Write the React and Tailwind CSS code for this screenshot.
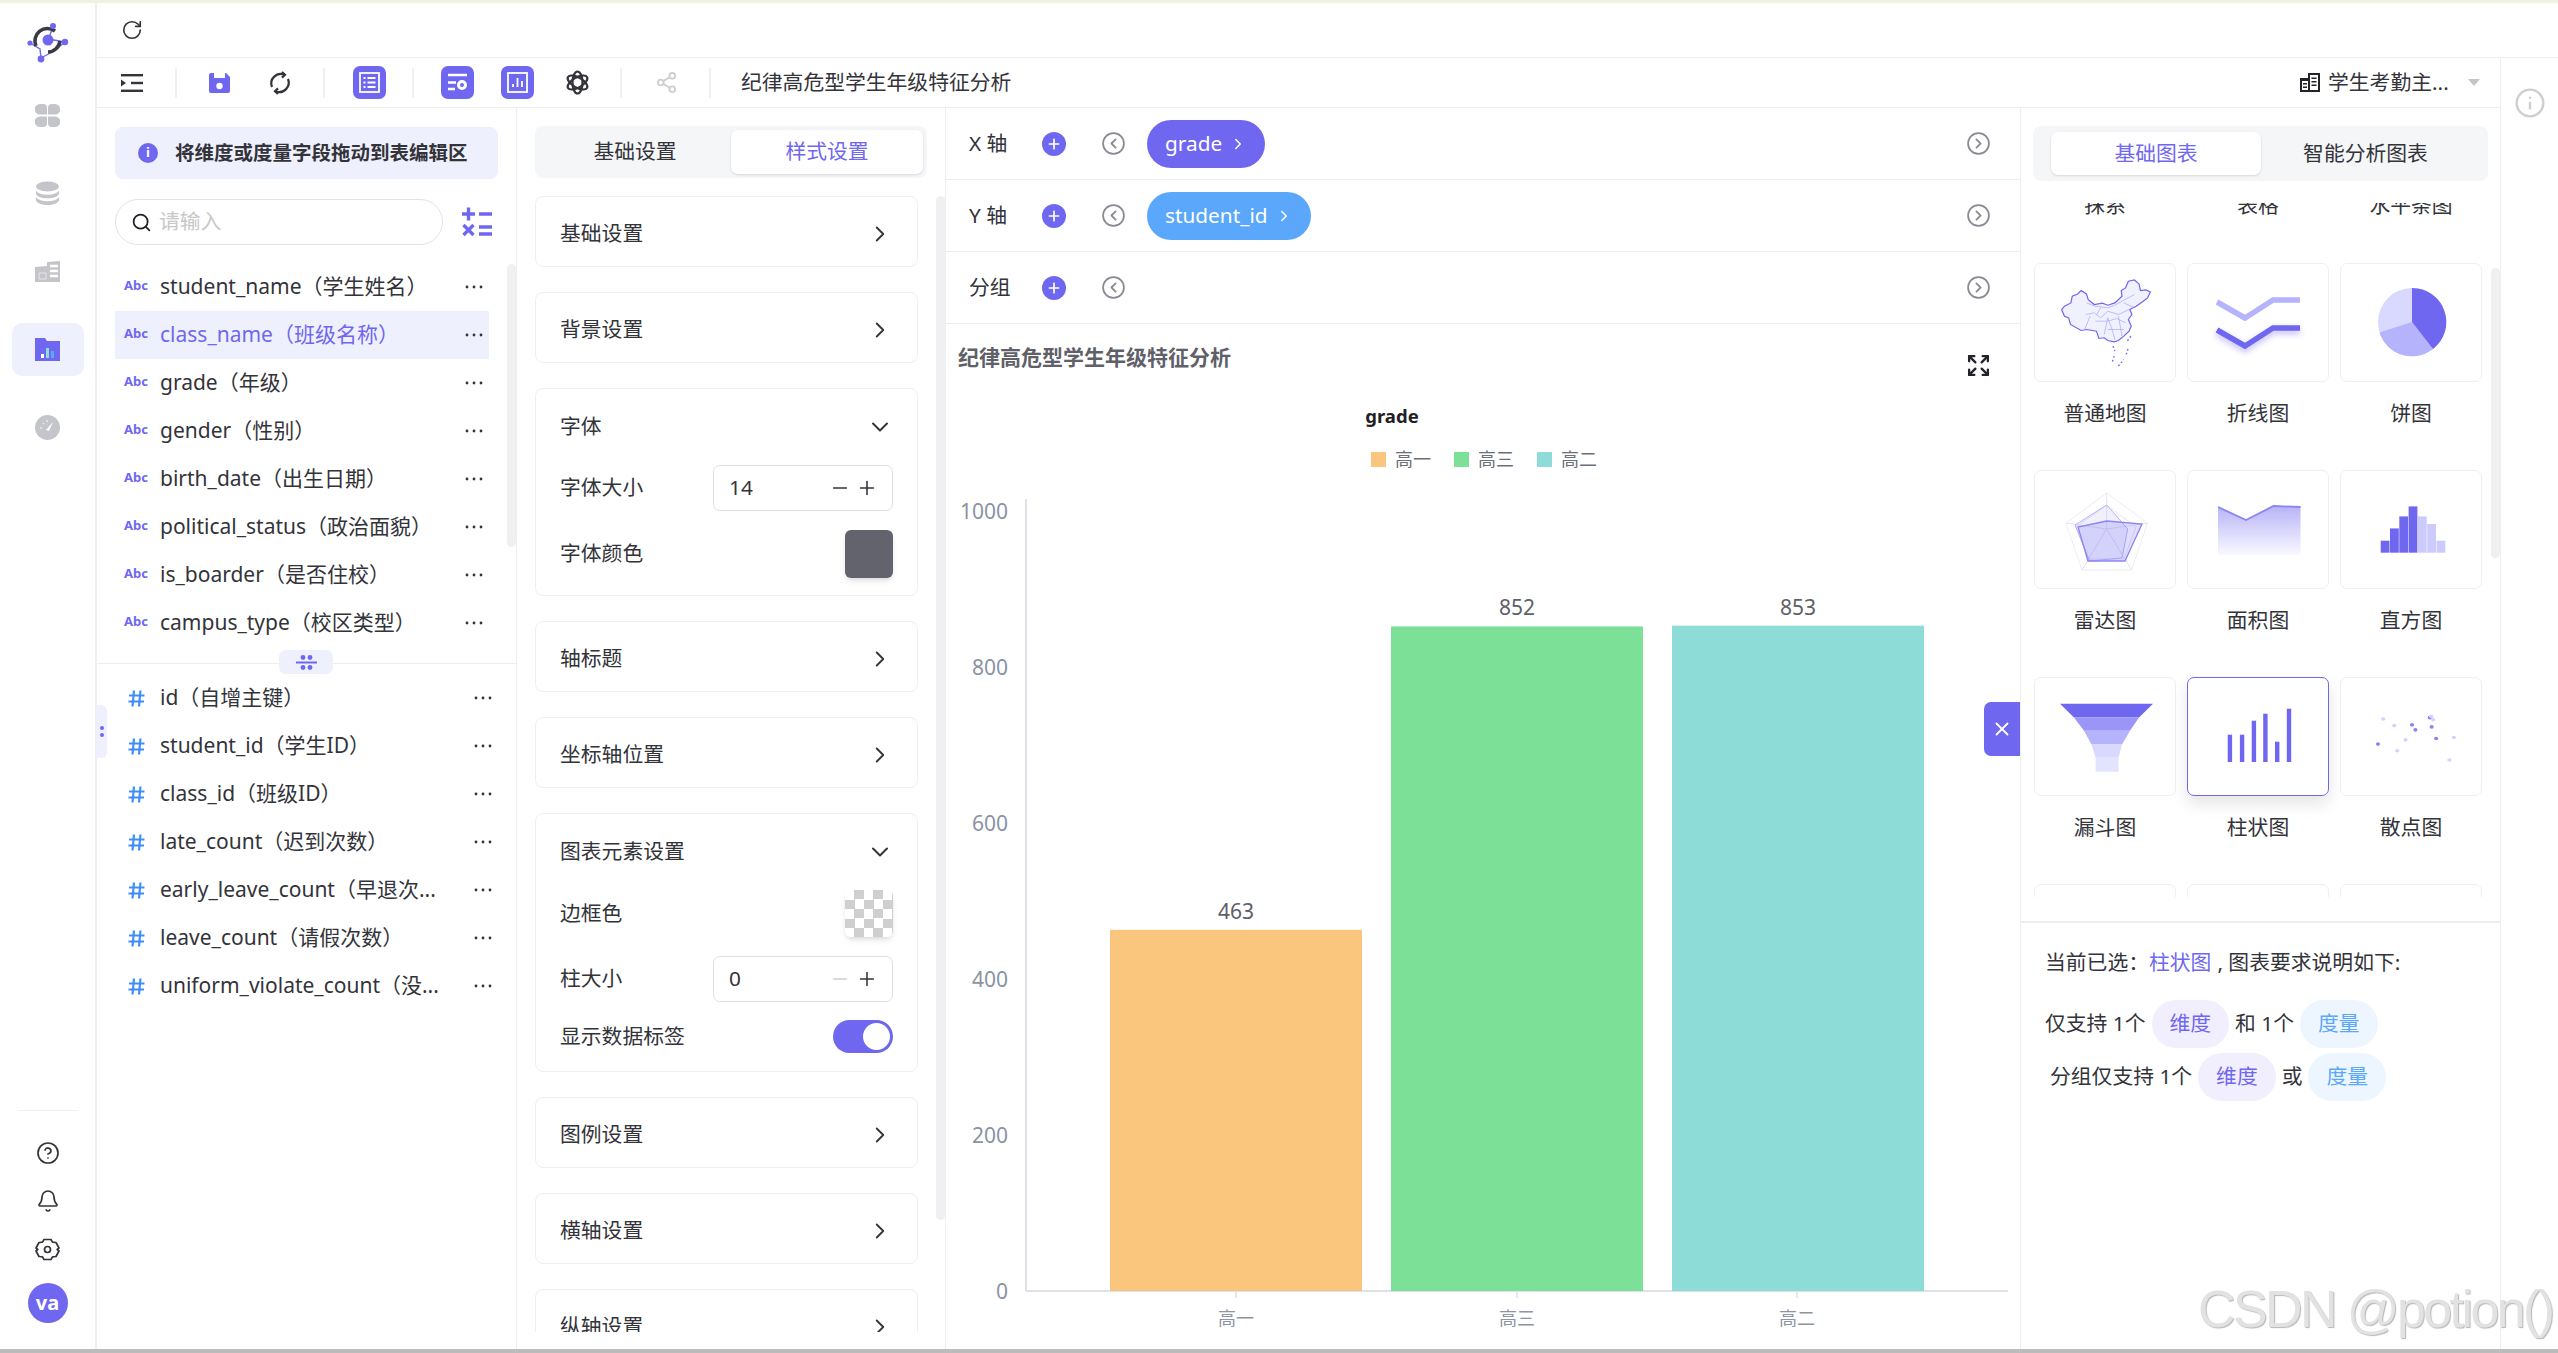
import React from 'react';
import { Search, ChevronRight, ChevronDown, Plus, Minus, X, Info, RotateCw, CircleChevronLeft, CircleChevronRight, CircleHelp, Bell, Share2, Expand } from 'lucide-react';

const dims = ['student_name（学生姓名）', 'class_name（班级名称）', 'grade（年级）', 'gender（性别）', 'birth_date（出生日期）', 'political_status（政治面貌）', 'is_boarder（是否住校）', 'campus_type（校区类型）'];
const measures = ['id（自增主键）', 'student_id（学生ID）', 'class_id（班级ID）', 'late_count（迟到次数）', 'early_leave_count（早退次...', 'leave_count（请假次数）', 'uniform_violate_count（没...'];

const Dots = () => (
    <svg width="18" height="4" viewBox="0 0 18 4" fill="#33333a"><circle cx="2" cy="2" r="1.4" /><circle cx="9" cy="2" r="1.4" /><circle cx="16" cy="2" r="1.4" /></svg>
);

// Left rail
const Logo = () => (
    <svg width="43" height="43" viewBox="0 0 43 43" fill="none">
        <g stroke="#7067f0" strokeWidth="1.4">
            <path d="M27 6 L22 19 M4 22 L14 28 L15 37 M39 21 L22 18 M15 37 L28 30 L39 21" />
        </g>
        <path d="M10 25a12.500 12.500 0 0 1 19-15" stroke="#3a3a44" strokeWidth="3.600" />
        <path d="M34 20a12.500 12.500 0 0 1-12 11" stroke="#3a3a44" strokeWidth="3.600" />
        <circle cx="22" cy="19" r="5.500" fill="#7067f0" />
        <circle cx="27" cy="5" r="3" fill="#7067f0" />
        <circle cx="4" cy="22" r="2.600" fill="#7067f0" />
        <circle cx="39" cy="21" r="3.200" fill="#7067f0" />
        <circle cx="15" cy="38" r="3.400" fill="#7067f0" />
    </svg>
);

const RailPetals = () => (
    <svg width="25" height="25" viewBox="0 0 25 25" fill="#c4c4cb">
        <path d="M5 1h3a4 4 0 0 1 4 4v6.500H5a4.500 4.500 0 0 1 0-10.500z" />
        <path d="M20 1h-3a4 4 0 0 0-4 4v6.500h7a4.500 4.500 0 0 0 0-10.500z" />
        <path d="M5 24h3a4 4 0 0 0 4-4v-6.500H5a4.500 4.500 0 0 0 0 10.500z" />
        <path d="M20 24h-3a4 4 0 0 1-4-4v-6.500h7a4.500 4.500 0 0 1 0 10.500z" />
    </svg>
);

const RailDb = () => (
    <svg width="25" height="25" viewBox="0 0 25 25" fill="#c4c4cb">
        <ellipse cx="12.500" cy="5.500" rx="11.500" ry="5" />
        <path d="M1 9.500c2 3 6 4.300 11.500 4.300S22 12.500 24 9.500v3.500c-1.500 3-6 4.300-11.500 4.300S2.500 16 1 13z" />
        <path d="M1 16c2 3 6 4.300 11.500 4.300S22 19 24 16v3.500c-1.500 3-6 4.500-11.500 4.500S2.500 22.500 1 19.500z" />
    </svg>
);

const RailFolder = () => (
    <svg width="25" height="25" viewBox="0 0 25 25">
        <path d="M0 8l12-1V3l13-1v21H0z" fill="#c4c4cb" />
        <path d="M15 7h8M15 12h8M15 17h8" stroke="#fff" strokeWidth="2.400" />
        <path d="M4 14h7v6H4z" fill="none" stroke="#e6e6ea" strokeWidth="1" />
    </svg>
);

const RailActive = () => (
    <svg width="25" height="25" viewBox="0 0 25 25">
        <path d="M0 1h10l2 3h13v20H0z" fill="#7067f0" />
        <rect x="6" y="17" width="3" height="4" fill="#fff" />
        <rect x="11" y="11" width="3" height="10" fill="#8edcd8" />
        <rect x="16" y="14" width="3" height="7" fill="#5ba7fb" />
    </svg>
);

const RailGauge = () => (
    <svg width="25" height="25" viewBox="0 0 25 25">
        <circle cx="12.500" cy="12.500" r="12.500" fill="#c4c4cb" />
        <path d="M11 15l7-8-4 9z" fill="#fff" />
        <path d="M5 13h2M8 8l1 1M12 5v2" stroke="#e8e8ec" strokeWidth="1.500" />
    </svg>
);

const GearHex = () => (
    <svg width="25" height="25" viewBox="0 0 25 25" fill="none" stroke="#33333a" strokeWidth="1.700" strokeLinejoin="round">
        <path d="M9 2.500h7l1.500 2.700 3.500.3 3 5.500-1.800 1.500 1.800 1.500-3 5.500-3.500.3L16 22.500H9l-1.500-2.700-3.500-.3-3-5.500L2.800 12.500 1 11l3-5.500 3.500-.3z" />
        <circle cx="12.500" cy="12.500" r="3" />
    </svg>
);

// Toolbar icons
const IndentIcon = () => (
    <svg width="22" height="22" viewBox="0 0 22 22" fill="#33333a">
        <rect x="0" y="2" width="22" height="2.400" /><rect x="10" y="9.800" width="12" height="2.400" /><rect x="0" y="17.600" width="22" height="2.400" />
        <path d="M0 7.500l5 3.500-5 3.500z" />
    </svg>
);

const SaveIcon = () => (
    <svg width="22" height="22" viewBox="0 0 22 22">
        <path d="M2 1h15l4 4v14a2 2 0 0 1-2 2H2a2 2 0 0 1-2-2V3a2 2 0 0 1 2-2z" fill="#7067f0" />
        <rect x="5" y="1" width="11" height="5" fill="#fff" />
        <circle cx="10.500" cy="14" r="3.200" fill="#fff" />
    </svg>
);

const SyncIcon = () => (
    <svg width="24" height="24" viewBox="0 0 24 24" fill="none" stroke="#33333a" strokeWidth="2.200">
        <path d="M4 16A9.500 9.500 0 0 1 16 3.500" /><path d="M20 8A9.500 9.500 0 0 1 8 20.500" />
        <path d="M14 1l3 2.800-3 2.800M10 23l-3-2.800 3-2.800" />
    </svg>
);

const ToolSquare = ({ children, className = 'ml-[27px]' }) => (
    <div className={`w-[33px] h-[33px] rounded-[7px] bg-[#7067f0] flex items-center justify-center ${className}`}>
        <svg width="25" height="25" viewBox="0 0 25 25" fill="none" stroke="#fff" strokeWidth="1.800">{children}</svg>
    </div>
);

const AtomIcon = () => (
    <svg width="25" height="25" viewBox="0 0 25 25" fill="none" stroke="#33333a" strokeWidth="2.200">
        <ellipse cx="12.500" cy="12.500" rx="11" ry="5" transform="rotate(30 12.500 12.500)" />
        <ellipse cx="12.500" cy="12.500" rx="11" ry="5" transform="rotate(-30 12.500 12.500)" />
        <ellipse cx="12.500" cy="12.500" rx="11" ry="5" transform="rotate(90 12.500 12.500)" />
    </svg>
);

const ToolSep = ({ className }) => <div className={`w-[2px] h-[30px] bg-[#f0f0f3] ${className}`} />;

const Toolbar = () => (
    <div className="h-[50px] flex items-center border-b border-[#eeeef1] shrink-0 pr-[20px]">
        <div className="ml-[24px]"><IndentIcon /></div>
        <ToolSep className="ml-[32px]" />
        <div className="ml-[32px]"><SaveIcon /></div>
        <div className="ml-[37px]"><SyncIcon /></div>
        <ToolSep className="ml-[31px]" />
        <ToolSquare className="ml-[28px]">
            <rect x="3" y="3" width="19" height="19" /><path d="M6.500 8h2M10.500 8h8M6.500 12.500h2M10.500 12.500h8M6.500 17h2M10.500 17h8" />
        </ToolSquare>
        <ToolSep className="ml-[26px]" />
        <ToolSquare>
            <path d="M3 5h19M3 12.500h8M3 19h7" strokeWidth="2.400" /><circle cx="17" cy="15" r="3.500" strokeWidth="3" />
        </ToolSquare>
        <ToolSquare>
            <rect x="3" y="3" width="19" height="19" /><path d="M8 17v-3M12.500 17V8M17 17v-6" />
        </ToolSquare>
        <div className="ml-[31px]"><AtomIcon /></div>
        <ToolSep className="ml-[30px]" />
        <Share2 className="ml-[33px] w-[23px] h-[23px] text-[#cfcfcf]" strokeWidth={2} />
        <ToolSep className="ml-[31px]" />
        <span className="ml-[30px] text-[20.8px] text-[#33333a]">纪律高危型学生年级特征分析</span>
        <div className="ml-auto flex items-center">
            <svg width="20" height="19" viewBox="0 0 20 19" fill="#22222a">
                <path d="M0 5h8V0h12v19H0zM2 8v9h6V8zM10 2v15h8V2z" />
                <path d="M3 10h4v1.500H3zM3 13.500h4V15H3zM11.500 4.500h5V6h-5zM11.500 8h5v1.500h-5zM11.500 11.500h5V13h-5z" />
            </svg>
            <span className="ml-[8px] text-[20.8px] text-[#33333a] w-[121px] whitespace-nowrap">学生考勤主...</span>
            <div className="ml-[19px] w-0 h-0 border-x-[6px] border-x-transparent border-t-[7px] border-t-[#c4c4c4]" />
        </div>
    </div>
);

// Field panel
const FieldPanel = () => (
    <div className="relative w-[420px] shrink-0 border-r border-[#eeeef1]">
        <div className="ml-[18px] mt-[19px] w-[383px] h-[52px] rounded-[8px] bg-[#eff0fd] flex items-center pl-[23px]">
            <div className="w-[20px] h-[20px] rounded-full bg-[#7067f0] text-white text-[13px] font-bold flex items-center justify-center">i</div>
            <span className="ml-[17px] text-[19.5px] font-bold text-[#33333a] whitespace-nowrap">将维度或度量字段拖动到表编辑区</span>
        </div>
        <div className="ml-[18px] mt-[20px] flex items-center">
            <div className="w-[328px] h-[46px] rounded-full border border-[#e3e3e6] flex items-center pl-[15px]">
                <Search className="w-[21px] h-[21px] text-[#22222a]" strokeWidth={2} />
                <input placeholder="请输入" className="ml-[7px] flex-1 min-w-0 bg-transparent outline-none text-[20.8px] placeholder:text-[#c8c8c8]" />
            </div>
            <svg className="ml-[19px]" width="30" height="30" viewBox="0 0 30 30" stroke="#7067f0" strokeWidth="3.400" fill="none">
                <path d="M0 7h13M6.500 0.500v13M17 7h13M17 20h13M17 27h13M1.500 18l10 10M11.500 18l-10 10" />
            </svg>
        </div>
        <div className="mt-[18px] ml-[18px] w-[374px]">
            {dims.map((name, i) => (
                <div key={name} className={`h-[48px] flex items-center pl-[9px] pr-[6px] ${i === 1 ? 'bg-[#eff0fd] text-[#7067f0]' : 'text-[#33333a]'}`}>
                    <span className="w-[36px] shrink-0 text-[13px] font-bold text-[#7067f0] -mt-[2px]">Abc</span>
                    <span className="flex-1 text-[21px] whitespace-nowrap -mt-[1px]">{name}</span>
                    <Dots />
                </div>
            ))}
        </div>
        <div className="relative mt-[16px] border-t border-[#eeeef1]">
            <div className="absolute left-[182px] -top-[14px] w-[54px] h-[24px] rounded-[7px] bg-[#eff0fd] flex items-center justify-center">
                <svg width="21" height="15" viewBox="0 0 21 15" fill="#7067f0"><rect x="0" y="6.500" width="21" height="2" /><circle cx="7" cy="2.500" r="2.400" /><circle cx="14" cy="2.500" r="2.400" /><circle cx="7" cy="12.500" r="2.400" /><circle cx="14" cy="12.500" r="2.400" /></svg>
            </div>
        </div>
        <div className="mt-[10px] pl-[31px] pr-[24px]">
            {measures.map(name => (
                <div key={name} className="h-[48px] flex items-center text-[#33333a]">
                    <svg className="shrink-0" width="17" height="17" viewBox="0 0 17 17" stroke="#3f8ff7" strokeWidth="2.200"><path d="M1 5.500h15.500M0.500 11.500h15.500M6 0.500l-1.500 16M12.500 0.500l-1.500 16" /></svg>
                    <span className="ml-[15px] flex-1 text-[21px] whitespace-nowrap">{name}</span>
                    <Dots />
                </div>
            ))}
        </div>
        {/* scrollbar and collapse handle sit over the list */}
        <div className="absolute left-[410px] top-[156px] w-[9px] h-[283px] rounded-full bg-[#f0f0f3]" />
        <div className="absolute left-0 top-[597px] w-[10px] h-[53px] rounded-r-[6px] bg-[#eff0fd] flex flex-col items-center justify-center gap-[3px]">
            <span className="w-[4px] h-[4px] rounded-full bg-[#7067f0]" /><span className="w-[4px] h-[4px] rounded-full bg-[#7067f0]" />
        </div>
    </div>
);

// Style panel
const CardRow = ({ title }) => (
    <div className="h-[71px] mb-[25px] shrink-0 rounded-[8px] border border-[#efeff2] flex items-center justify-between pt-[4px] pl-[24px] pr-[24px]">
        <span className="text-[20.8px] text-[#33333a]">{title}</span>
        <ChevronRight className="w-[26px] h-[26px] text-[#33333a]" strokeWidth={1.700} />
    </div>
);

const CardHead = ({ title }) => (
    <div className="h-[76px] flex items-center justify-between -mr-[1px]">
        <span className="text-[20.8px] text-[#33333a]">{title}</span>
        <ChevronDown className="w-[28px] h-[28px] text-[#33333a]" strokeWidth={1.700} />
    </div>
);

const NumInput = ({ value, disabled }) => (
    <div className="w-[180px] h-[46px] rounded-[7px] border border-[#dfdfe3] flex items-center pl-[15px] pr-[14px]">
        <span className="flex-1 text-[20.8px] text-[#33333a]">{value}</span>
        <Minus className={`w-[22px] h-[22px] ${disabled ? 'text-[#cfcfd3]' : 'text-[#33333a]'}`} strokeWidth={1.700} />
        <Plus className="ml-[5px] w-[22px] h-[22px] text-[#33333a]" strokeWidth={1.700} />
    </div>
);

const StylePanel = () => (
    <div className="relative w-[429px] shrink-0 border-r border-[#eeeef1] flex flex-col">
        <div className="ml-[18px] mt-[18px] w-[392px] h-[52px] shrink-0 rounded-[8px] bg-[#f5f6f8] p-[4px] grid grid-cols-2 text-[20.8px]">
            <div className="flex items-center justify-center text-[#33333a]">基础设置</div>
            <div className="flex items-center justify-center rounded-[7px] bg-white shadow-sm text-[#7067f0]">样式设置</div>
        </div>
        <div className="mt-[18px] mb-[17px] ml-[18px] w-[383px] flex-1 min-h-0 overflow-hidden flex flex-col">
            <CardRow title="基础设置" />
            <CardRow title="背景设置" />
            <div className="h-[208px] mb-[25px] shrink-0 rounded-[8px] border border-[#efeff2] px-[24px]">
                <CardHead title="字体" />
                <div className="flex items-center justify-between">
                    <span className="text-[20.8px] text-[#33333a]">字体大小</span>
                    <NumInput value="14" />
                </div>
                <div className="mt-[19px] flex items-center justify-between">
                    <span className="text-[20.8px] text-[#33333a]">字体颜色</span>
                    <div className="w-[48px] h-[48px] rounded-[6px] bg-[#63636d] shadow-md" />
                </div>
            </div>
            <CardRow title="轴标题" />
            <CardRow title="坐标轴位置" />
            <div className="h-[259px] mb-[25px] shrink-0 rounded-[8px] border border-[#efeff2] px-[24px]">
                <CardHead title="图表元素设置" />
                <div className="flex items-center justify-between">
                    <span className="text-[20.8px] text-[#33333a]">边框色</span>
                    <div className="w-[48px] h-[47px] rounded-[6px] shadow-md bg-[conic-gradient(#cfcfcf_25%,#fff_0_50%,#cfcfcf_0_75%,#fff_0)] bg-[length:19px_19px]" />
                </div>
                <div className="mt-[19px] flex items-center justify-between">
                    <span className="text-[20.8px] text-[#33333a]">柱大小</span>
                    <NumInput value="0" disabled />
                </div>
                <div className="mt-[18px] flex items-center justify-between">
                    <span className="text-[20.8px] text-[#33333a]">显示数据标签</span>
                    <div className="w-[60px] h-[33px] rounded-full bg-[#7067f0] flex items-center justify-end pr-[3px]">
                        <div className="w-[27px] h-[27px] rounded-full bg-white" />
                    </div>
                </div>
            </div>
            <CardRow title="图例设置" />
            <CardRow title="横轴设置" />
            <CardRow title="纵轴设置" />
        </div>
        <div className="absolute left-[419px] top-[88px] w-[9px] h-[1024px] rounded-full bg-[#f0f0f3]" />
    </div>
);

// Encoding rows + chart
const EncodeRow = ({ label, pill, pillClass }) => (
    <div className="h-[72px] shrink-0 border-b border-[#eeeef1] flex items-center pl-[23px] pr-[29px]">
        <span className="w-[73px] shrink-0 text-[20.8px] text-[#33333a] whitespace-nowrap">{label}</span>
        <div className="w-[24px] h-[24px] rounded-full bg-[#7067f0] flex items-center justify-center">
            <Plus className="w-[16px] h-[16px] text-white" strokeWidth={2.500} />
        </div>
        <CircleChevronLeft className="ml-[35px] w-[25px] h-[25px] text-[#8a8a96]" strokeWidth={1.700} />
        {pill && (
            <div className={`ml-[21px] h-[48px] rounded-full flex items-center pl-[18px] pr-[18px] gap-[7px] text-[20.8px] text-white ${pillClass}`}>
                {pill}
                <ChevronRight className="w-[18px] h-[18px]" strokeWidth={2} />
            </div>
        )}
        <CircleChevronRight className="ml-auto w-[25px] h-[25px] text-[#8a8a96]" strokeWidth={1.700} />
    </div>
);

const bars = [
    { x: 1110, label: '高一', value: 463, color: '#fac67e', tick: 1236 },
    { x: 1391, label: '高三', value: 852, color: '#7ce096', tick: 1517 },
    { x: 1672, label: '高二', value: 853, color: '#8edcd8', tick: 1797 },
];
const yTicks = [0, 200, 400, 600, 800, 1000];
const legend = [
    { x: 1371, label: '高一', color: '#fac67e' },
    { x: 1454, label: '高三', color: '#7ce096' },
    { x: 1537, label: '高二', color: '#8edcd8' },
];

const BarChart = () => (
    <svg width="1074" height="957" viewBox="946 392 1074 957" className="shrink-0">
        <text x="1392" y="423" textAnchor="middle" fontSize="18.5" fontWeight="700" fill="#1f2024">grade</text>
        {legend.map(l => (
            <g key={l.x}>
                <rect x={l.x} y="452" width="15" height="15" fill={l.color} />
                <text x={l.x + 24} y="466" fontSize="18" fill="#6b6f7a">{l.label}</text>
            </g>
        ))}
        {yTicks.map(t => (
            <text key={t} x="1008" y={1291 - t * 0.78 + 8} textAnchor="end" fontSize="21" fill="#8a92a3">{t}</text>
        ))}
        <path d="M1026 499V1291M1026 1291H2008" stroke="#dfe1e8" strokeWidth="2" fill="none" />
        {bars.map(b => (
            <g key={b.x}>
                <rect x={b.x} y={1291 - b.value * 0.78} width="252" height={b.value * 0.78} fill={b.color} />
                <text x={b.x + 126} y={1291 - b.value * 0.78 - 11} textAnchor="middle" fontSize="21" fill="#5f6068">{b.value}</text>
                <path d={`M${b.tick} 1292V1298`} stroke="#dfe1e8" strokeWidth="1.500" />
                <text x={b.tick} y="1325" textAnchor="middle" fontSize="18" fill="#8e94a4">{b.label}</text>
            </g>
        ))}
    </svg>
);

const CenterPanel = () => (
    <div className="relative w-[1075px] shrink-0 border-r border-[#eeeef1] flex flex-col">
        <EncodeRow label="X 轴" pill="grade" pillClass="bg-[#7067f0]" />
        <EncodeRow label="Y 轴" pill="student_id" pillClass="bg-[#5ba7fb]" />
        <EncodeRow label="分组" />
        <div className="h-[68px] shrink-0 flex items-start justify-between pt-[18px] pl-[12px] pr-[29px]">
            <span className="text-[21px] font-bold text-[#606068]">纪律高危型学生年级特征分析</span>
            <Expand className="mt-[11px] w-[25px] h-[25px] text-[#22222a]" strokeWidth={2.200} />
        </div>
        <BarChart />
        <div className="absolute right-0 top-[594px] w-[36px] h-[54px] rounded-l-[7px] bg-[#7067f0] flex items-center justify-center">
            <X className="w-[22px] h-[22px] text-white" strokeWidth={2} />
        </div>
    </div>
);

// Chart type thumbnails, drawn in card coordinates
const Thumb = ({ children, viewBox = '0 0 142 118' }) => (
    <svg width="142" height="118" viewBox={viewBox} preserveAspectRatio="none" fill="none">{children}</svg>
);

const MapThumb = () => (
    <Thumb viewBox="95 788 400 355">
        <path d="M170 925L178 915L196 905L200 885L215 878L225 868L240 878L245 895L262 910L285 906L300 912L320 905L340 885L338 868L350 860L358 840L375 836L388 848L392 868L408 866L420 872L412 890L400 900L380 915L362 925L368 940L358 955L366 975L360 990L345 1005L330 1018L318 1022L300 1018L290 1010L275 1012L268 990L240 985L225 988L195 970L190 950L178 945Z" fill="#f1f1fe" stroke="#7067f0" strokeWidth="3.500" />
        <path d="M240 905L265 915L300 920L320 912L340 900L375 880M238 940L262 935L280 950L300 930L330 940L360 925M265 960L300 960L325 952L350 965M290 1000L300 950L312 985L320 1015M330 945L340 1005M235 985L250 945M300 985L345 985M345 905L372 918M280 920L268 942" stroke="#b5b3fc" strokeWidth="2.500" />
        <path d="M315 1035L320 1050M318 1065L312 1085M330 1095L345 1075M352 1060L358 1040M365 1005L355 1020" stroke="#7067f0" strokeWidth="4" strokeDasharray="5 7" />
    </Thumb>
);

const LineThumb = () => (
    <Thumb>
        <polyline points="29,38 57,54 85,36 112,36" stroke="#b5b3fc" strokeWidth="5.500" />
        <polyline points="29,66 57,82 85,64 112,64" stroke="#7067f0" strokeWidth="5.500" style={{ filter: 'drop-shadow(0 3px 3px rgba(112,103,240,.45))' }} />
    </Thumb>
);

const PieThumb = () => (
    <Thumb>
        <circle cx="71" cy="58" r="34" fill="#d9d8fe" />
        <path d="M71 58L92 85A34 34 0 0 1 38.500 68.500Z" fill="#b5b3fc" />
        <path d="M71 58V24A34 34 0 0 1 92 85Z" fill="#7067f0" />
    </Thumb>
);

const RadarThumb = () => (
    <Thumb>
        <path d="M71.700 22L112.500 52L96.500 99H47L31 52Z" stroke="#ececf4" strokeWidth="1" />
        <path d="M71.700 34L101 56L89 88H54L41 56Z M71.700 58V22M71.700 58L112.500 52M71.700 58L96.500 99M71.700 58L47 99M71.700 58L31 52" stroke="#e4e3f6" strokeWidth="1" />
        <path d="M71.700 34L92.700 58L87 87L54.500 90L40 54Z" fill="#7067f0" fillOpacity=".1" stroke="#b5b3fc" strokeWidth="1" />
        <path d="M71.700 50L107 53L90 90L53 90L43 56Z" fill="#7067f0" fillOpacity=".22" stroke="#8b84f3" strokeWidth="1.300" />
    </Thumb>
);

const AreaThumb = () => (
    <Thumb>
        <defs>
            <linearGradient id="areaFill" x1="0" y1="0" x2="0" y2="1">
                <stop offset="0" stopColor="#7067f0" stopOpacity=".5" />
                <stop offset="1" stopColor="#7067f0" stopOpacity=".04" />
            </linearGradient>
        </defs>
        <path d="M30 36L58 49L85.500 35L112.500 36V84H30Z" fill="url(#areaFill)" />
        <polyline points="30,36 58,49 85.500,35 112.500,36" stroke="#8b84f3" strokeWidth="1.800" />
    </Thumb>
);

const HistThumb = () => {
    const tops = [69.700, 57.400, 45.400, 35.400, 45.400, 53, 69.700];
    return (
        <Thumb>
            {tops.map((t, i) => (
                <rect key={i} x={39.700 + i * 9.300} y={t} width="8.800" height={81.700 - t} fill={i < 4 ? '#7067f0' : '#cccbfd'} />
            ))}
        </Thumb>
    );
};

const FunnelThumb = () => (
    <Thumb>
        <path d="M25 25.700H118L104 39.400H39Z" fill="#7067f0" />
        <path d="M39 39.400H104L95 52.700H49Z" fill="#9a95f7" />
        <path d="M49 52.700H95L87 66.400H56.500Z" fill="#b5b3fc" />
        <path d="M56.500 66.400H87L83.500 79.700H60.600Z" fill="#d9d8fe" />
        <rect x="60.600" y="79.700" width="22.900" height="14" fill="#e4e3fd" />
    </Thumb>
);

const ColumnThumb = () => {
    const cols = [[39.700, 56.700], [51.900, 56.700], [63.700, 42.700], [75.200, 35.700], [87, 63.700], [98.800, 30.700]];
    return (
        <Thumb>
            {cols.map(([x, top]) => <rect key={x} x={x} y={top} width="4.400" height={84 - top} fill="#7067f0" />)}
        </Thumb>
    );
};

const scatter = [[1104, 833, 0], [1133, 853, 0], [1180, 851, 1], [1189, 866, 1], [1227, 829, 1], [1231, 825, 0], [1236, 835, 0], [1232, 857, 1], [1244, 892, 1], [1291, 889, 0], [1279, 957, 0], [1163, 896, 0], [1141, 929, 0], [1090, 909, 1]];

const ScatterThumb = () => (
    <Thumb viewBox="992 709 376 357">
        {scatter.map(([x, y, dark]) => <circle key={`${x}-${y}`} cx={x} cy={y} r="5.500" fill={dark ? '#8b84f3' : '#d3d1fd'} />)}
    </Thumb>
);

const chartRows = [
    [['普通地图', MapThumb], ['折线图', LineThumb], ['饼图', PieThumb]],
    [['雷达图', RadarThumb], ['面积图', AreaThumb], ['直方图', HistThumb]],
    [['漏斗图', FunnelThumb], ['柱状图', ColumnThumb], ['散点图', ScatterThumb]],
];

const ChartCard = ({ label, Icon }) => {
    const selected = label === '柱状图';
    return (
        <div>
            <div className={`h-[119px] rounded-[7px] overflow-hidden border ${selected ? 'border-[#7067f0] shadow-[0_8px_16px_rgba(0,0,0,0.1)]' : 'border-[#efeff2]'}`}>
                <Icon />
            </div>
            <div className="mt-[12px] h-[40px] mb-[36px] flex items-center justify-center text-[20.8px] text-[#33333a]">{label}</div>
        </div>
    );
};

const ChartPanel = () => (
    <div className="relative flex-1 min-w-0 flex flex-col">
        <div className="ml-[12px] mt-[18px] w-[455px] h-[55px] shrink-0 rounded-[8px] bg-[#f5f6f8] flex items-center pl-[18px] text-[20.8px]">
            <div className="w-[210px] h-[43px] rounded-[7px] bg-white shadow-sm flex items-center justify-center text-[#7067f0]">基础图表</div>
            <div className="flex-1 flex items-center justify-center text-[#33333a] pr-[18px]">智能分析图表</div>
        </div>
        <div className="mt-[22px] h-[694px] shrink-0 overflow-hidden pl-[13px]">
            <div className="w-[448px] -mt-[17px] h-[40px] mb-[37px] grid grid-cols-3 gap-x-[11px] text-[20.8px] text-[#33333a] text-center items-center">
                <span>抹系</span><span>表格</span><span>水平条图</span>
            </div>
            {chartRows.map((row, i) => (
                <div key={i} className="w-[448px] grid grid-cols-3 gap-x-[11px]">
                    {row.map(([label, Icon]) => <ChartCard key={label} label={label} Icon={Icon} />)}
                </div>
            ))}
            <div className="w-[448px] grid grid-cols-3 gap-x-[11px]">
                <div className="h-[60px] rounded-[7px] border border-[#efeff2]" />
                <div className="h-[60px] rounded-[7px] border border-[#efeff2]" />
                <div className="h-[60px] rounded-[7px] border border-[#efeff2]" />
            </div>
        </div>
        <div className="mt-[24px] flex-1 min-h-0 border-t-2 border-[#eeeef1] pl-[24px] text-[20.8px] text-[#33333a]">
            <div className="mt-[26px] h-[28px] flex items-center whitespace-nowrap">
                当前已选：<span className="text-[#7067f0]">柱状图</span><span className="ml-[6px]">, 图表要求说明如下:</span>
            </div>
            <div className="mt-[23px] flex items-center gap-[6px] whitespace-nowrap">
                <span>仅支持 1个</span>
                <span className="h-[48px] px-[18px] rounded-full bg-[#f1effd] text-[#7067f0] flex items-center">维度</span>
                <span>和 1个</span>
                <span className="h-[48px] px-[18px] rounded-full bg-[#edf6ff] text-[#5ba7fb] flex items-center">度量</span>
            </div>
            <div className="mt-[5px] pl-[5px] flex items-center gap-[6px] whitespace-nowrap">
                <span>分组仅支持 1个</span>
                <span className="h-[48px] px-[18px] rounded-full bg-[#f1effd] text-[#7067f0] flex items-center">维度</span>
                <span>或</span>
                <span className="h-[48px] px-[18px] rounded-full bg-[#edf6ff] text-[#5ba7fb] flex items-center">度量</span>
            </div>
        </div>
        <div className="absolute right-0 top-[160px] w-[9px] h-[290px] rounded-full bg-[#f0f0f3]" />
    </div>
);

const Rail = () => (
    <div className="w-[97px] shrink-0 border-r-2 border-[#f0f0f3] flex flex-col items-center">
        <div className="pt-[18px] mb-[12px]"><Logo /></div>
        <div className="h-[78px] flex items-center justify-center"><RailPetals /></div>
        <div className="h-[78px] flex items-center justify-center"><RailDb /></div>
        <div className="h-[78px] flex items-center justify-center"><RailFolder /></div>
        <div className="h-[78px] flex items-center justify-center">
            <div className="w-[72px] h-[53px] rounded-[10px] bg-[#eff0fd] flex items-center justify-center"><RailActive /></div>
        </div>
        <div className="h-[78px] flex items-center justify-center"><RailGauge /></div>
        <div className="mt-auto w-[60px] border-t border-[#f0f0f3]" />
        <div className="mt-[18px] h-[48px] flex items-center"><CircleHelp className="w-[24px] h-[24px] text-[#33333a]" strokeWidth={1.700} /></div>
        <div className="h-[48px] flex items-center"><Bell className="w-[24px] h-[24px] text-[#33333a]" strokeWidth={1.700} /></div>
        <div className="h-[48px] flex items-center"><GearHex /></div>
        <div className="mt-[10px] mb-[26px] w-[40px] h-[40px] rounded-full bg-[#7067f0] text-white text-[20px] font-bold flex items-center justify-center">va</div>
    </div>
);

export default function App() {
    return (
        <div className="relative w-[2558px] h-[1353px] overflow-hidden bg-white flex flex-col text-[#33333a] [font-family:'Noto_Sans','Noto_Sans_CJK_SC',sans-serif]">
            <div className="h-[3px] shrink-0 bg-[#eef3e2]" />
            <div className="flex-1 min-h-0 flex">
                <Rail />
                <div className="flex-1 min-w-0 flex flex-col">
                    <div className="h-[55px] shrink-0 border-b border-[#eeeef1] flex items-center pl-[24px]">
                        <RotateCw className="w-[22px] h-[22px] text-[#33333a]" strokeWidth={1.800} />
                    </div>
                    <div className="flex-1 min-h-0 flex">
                        <div className="w-[2404px] shrink-0 border-r border-[#eeeef1] flex flex-col">
                            <Toolbar />
                            <div className="flex-1 min-h-0 flex">
                                <FieldPanel />
                                <StylePanel />
                                <CenterPanel />
                                <ChartPanel />
                            </div>
                        </div>
                        <div className="flex-1 flex justify-center pt-[29px]">
                            <Info className="w-[32px] h-[32px] text-[#cfcfcf]" strokeWidth={1.800} />
                        </div>
                    </div>
                </div>
            </div>
            <div className="h-[4px] shrink-0 bg-[#bcbcbc]" />
            <div className="absolute left-[2198px] top-[1270px] whitespace-nowrap text-[52px] tracking-[-2.6px] text-[#e2e2e2] [font-family:'Liberation_Sans',sans-serif] [text-shadow:1px_1px_1px_#b5b5b5]">CSDN @potion()</div>
        </div>
    );
}
